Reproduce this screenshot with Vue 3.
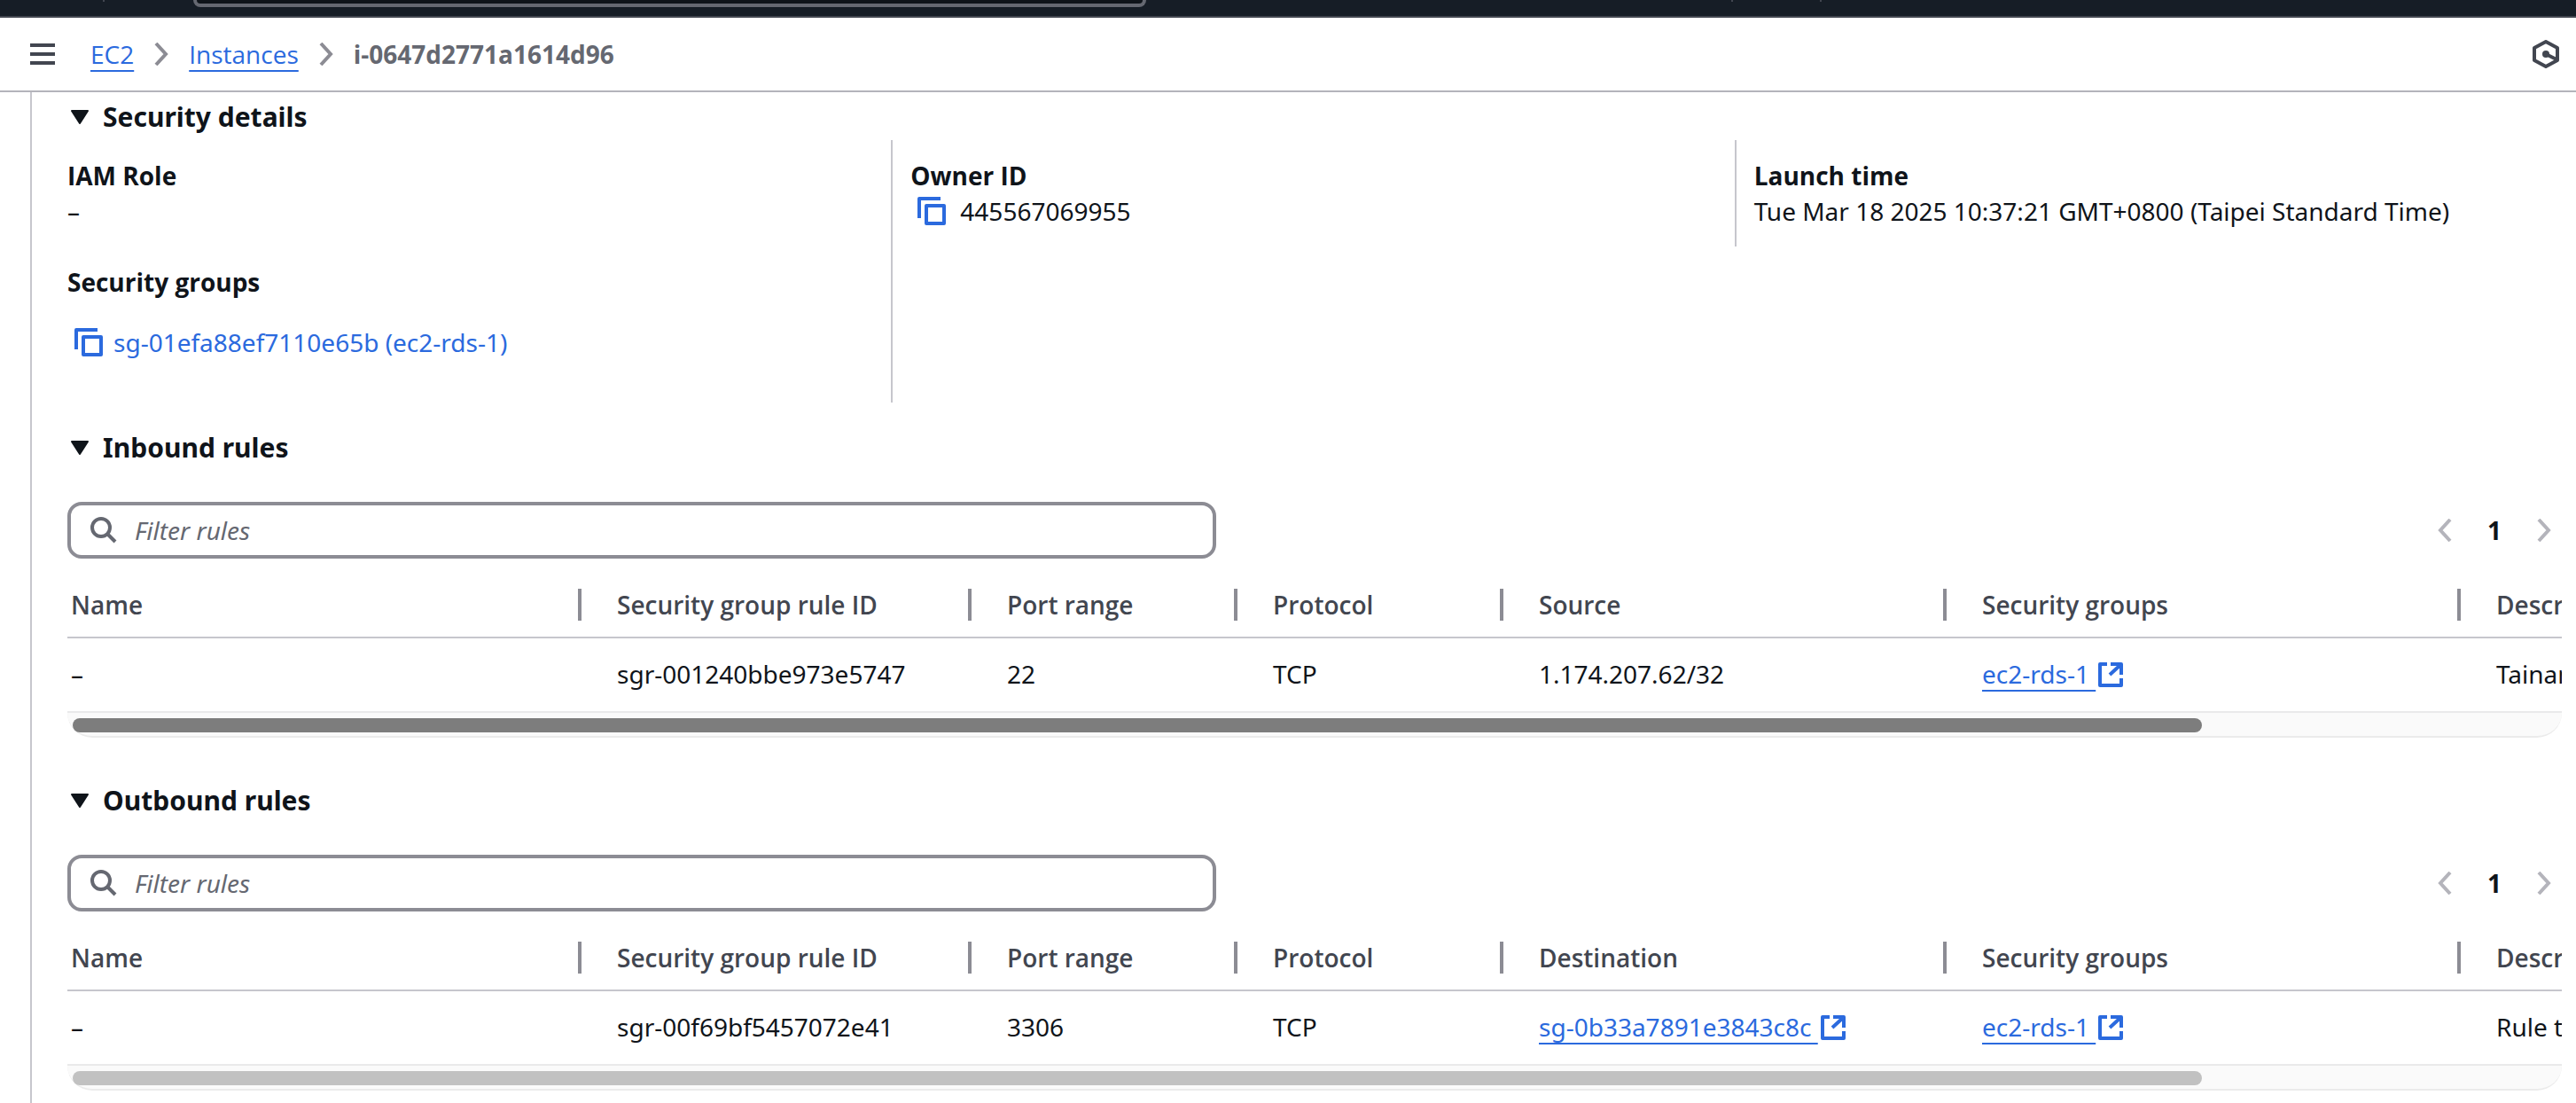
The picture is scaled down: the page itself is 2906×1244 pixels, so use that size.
<script setup>
import { ref } from 'vue'

const sections = ref([
  {
    id: 'inbound',
    title: 'Inbound rules',
    peerLabel: 'Source',
    active: true,
    rows: [
      { name: '–', rule: 'sgr-001240bbe973e5747', port: '22', protocol: 'TCP', peer: '1.174.207.62/32', peerLink: false, group: 'ec2-rds-1', description: 'Tainan' },
    ],
  },
  {
    id: 'outbound',
    title: 'Outbound rules',
    peerLabel: 'Destination',
    active: false,
    rows: [
      { name: '–', rule: 'sgr-00f69bf5457072e41', port: '3306', protocol: 'TCP', peer: 'sg-0b33a7891e3843c8c', peerLink: true, group: 'ec2-rds-1', description: 'Rule to connect' },
    ],
  },
])
</script>

<template>
  <div class="page">
    <header class="topbar">
      <span class="tick tick-left"></span>
      <div class="global-search"></div>
      <span class="tick tick-mid"></span>
      <span class="tick tick-right"></span>
    </header>

    <nav class="crumbs" aria-label="Breadcrumbs">
      <button class="icon-btn menu" type="button" aria-label="Open navigation">
        <svg width="28" height="24" viewBox="0 0 28 24"><path d="M0 2h28M0 12h28M0 22h28" stroke="#424650" stroke-width="4" /></svg>
      </button>
      <a class="link" href="#">EC2</a>
      <svg class="sep" width="16" height="26" viewBox="0 0 16 26"><path d="M2 1l11 12L2 25" fill="none" stroke="#8c8c94" stroke-width="4" /></svg>
      <a class="link" href="#">Instances</a>
      <svg class="sep" width="16" height="26" viewBox="0 0 16 26"><path d="M2 1l11 12L2 25" fill="none" stroke="#8c8c94" stroke-width="4" /></svg>
      <span class="current">i-0647d2771a1614d96</span>
      <button class="icon-btn assistant" type="button" aria-label="Assistant">
        <svg width="30" height="32" viewBox="0 0 30 32" fill="none" stroke="#424650" stroke-width="4" stroke-linejoin="round">
          <path d="M15 2L28 9v14l-13 7L2 23V9z" />
          <path d="M15 16l12 6" />
          <circle cx="15" cy="16" r="4" fill="#424650" stroke="none" />
        </svg>
      </button>
    </nav>

    <main class="panel">
      <h3 class="heading">
        <button class="toggle" type="button" aria-expanded="true">
          <svg width="20" height="16" viewBox="0 0 20 16"><path d="M1 1h18l-9 14z" fill="#0f141a" stroke="#0f141a" stroke-width="2" stroke-linejoin="round" /></svg>
          Security details
        </button>
      </h3>

      <div class="details">
        <dl class="col">
          <div class="field">
            <dt>IAM Role</dt>
            <dd>–</dd>
          </div>
          <div class="field">
            <dt>Security groups</dt>
            <dd class="spaced">
              <button class="copy" type="button" aria-label="Copy security group">
                <svg width="32" height="32" viewBox="0 0 32 32" fill="none" stroke="#2b6ade" stroke-width="4" stroke-linejoin="round"><path d="M2 24V2h24M10 10h20v20H10z" /></svg>
              </button>
              <a class="plain" href="#">sg-01efa88ef7110e65b (ec2-rds-1)</a>
            </dd>
          </div>
        </dl>
        <dl class="col ruled">
          <div class="field">
            <dt>Owner ID</dt>
            <dd>
              <button class="copy wide" type="button" aria-label="Copy owner ID">
                <svg width="32" height="32" viewBox="0 0 32 32" fill="none" stroke="#2b6ade" stroke-width="4" stroke-linejoin="round"><path d="M2 24V2h24M10 10h20v20H10z" /></svg>
              </button>
              445567069955
            </dd>
          </div>
        </dl>
        <dl class="col ruled short">
          <div class="field">
            <dt>Launch time</dt>
            <dd>Tue Mar 18 2025 10:37:21 GMT+0800 (Taipei Standard Time)</dd>
          </div>
        </dl>
      </div>

      <section v-for="s in sections" :key="s.id" class="rules">
        <h3 class="heading">
          <button class="toggle" type="button" aria-expanded="true">
            <svg width="20" height="16" viewBox="0 0 20 16"><path d="M1 1h18l-9 14z" fill="#0f141a" stroke="#0f141a" stroke-width="2" stroke-linejoin="round" /></svg>
            {{ s.title }}
          </button>
        </h3>

        <div class="tools">
          <label class="filter">
            <svg width="30" height="30" viewBox="0 0 30 30" fill="none" stroke="#656871" stroke-width="4"><circle cx="12" cy="12" r="10" /><path d="M19 19l9 9" /></svg>
            <input type="search" placeholder="Filter rules" :aria-label="'Filter ' + s.title" />
          </label>
          <div class="pager">
            <button class="icon-btn" type="button" disabled aria-label="Previous page">
              <svg width="16" height="26" viewBox="0 0 16 26"><path d="M14 1L3 13l11 12" fill="none" stroke="#b4b4bb" stroke-width="4" /></svg>
            </button>
            <button class="icon-btn page-no" type="button">1</button>
            <button class="icon-btn" type="button" disabled aria-label="Next page">
              <svg width="16" height="26" viewBox="0 0 16 26"><path d="M2 1l11 12L2 25" fill="none" stroke="#b4b4bb" stroke-width="4" /></svg>
            </button>
          </div>
        </div>

        <div class="scroller">
          <table>
            <colgroup>
              <col class="w-name" /><col class="w-rule" /><col class="w-small" /><col class="w-small" /><col class="w-peer" /><col class="w-group" /><col class="w-group" />
            </colgroup>
            <thead>
              <tr>
                <th><span>Name</span></th>
                <th><span>Security group rule ID</span></th>
                <th><span>Port range</span></th>
                <th><span>Protocol</span></th>
                <th><span>{{ s.peerLabel }}</span></th>
                <th><span>Security groups</span></th>
                <th><span>Description</span></th>
              </tr>
            </thead>
            <tbody>
              <tr v-for="r in s.rows" :key="r.rule">
                <td>{{ r.name }}</td>
                <td>{{ r.rule }}</td>
                <td>{{ r.port }}</td>
                <td>{{ r.protocol }}</td>
                <td>
                  <a v-if="r.peerLink" class="link" href="#">{{ r.peer }}&nbsp;<svg class="ext" width="28" height="28" viewBox="0 0 28 28" fill="none" stroke="#2b6ade" stroke-width="4"><path d="M10 2H2v24h24v-8M14 2h12v12M25 3L13 14" stroke-linejoin="round" /></svg></a>
                  <template v-else>{{ r.peer }}</template>
                </td>
                <td>
                  <a class="link" href="#">{{ r.group }}&nbsp;<svg class="ext" width="28" height="28" viewBox="0 0 28 28" fill="none" stroke="#2b6ade" stroke-width="4"><path d="M10 2H2v24h24v-8M14 2h12v12M25 3L13 14" stroke-linejoin="round" /></svg></a>
                </td>
                <td>{{ r.description }}</td>
              </tr>
            </tbody>
          </table>
        </div>
        <div class="track"><div class="thumb" :class="{ active: s.active }"></div></div>
      </section>
    </main>
  </div>
</template>

<style>
body {
  margin: 0;
  background: #fff;
}
</style>

<style scoped>
.page {
  display: flex;
  flex-direction: column;
  min-height: 100vh;
  font-family: "Noto Sans", "Open Sans", sans-serif;
  font-size: 28px;
  line-height: 40px;
  color: #0f141a;
}
button {
  padding: 0;
  border: 0;
  background: none;
  font: inherit;
  color: inherit;
}
svg {
  display: block;
  flex: none;
}
.topbar {
  display: flex;
  align-items: flex-start;
  height: 18px;
  background: #161d26;
  border-bottom: 2px solid #424650;
}
.tick {
  width: 2px;
  height: 2px;
  background: #424650;
}
.tick-left {
  margin-left: 116px;
}
.tick-mid {
  margin-left: 660px;
}
.tick-right {
  margin-left: 98px;
}
.global-search {
  box-sizing: border-box;
  width: 37%;
  height: 8px;
  margin-left: 100px;
  background: #0f141a;
  border: 4px solid #656871;
  border-top: 0;
  border-radius: 0 0 12px 12px;
}
.crumbs {
  display: flex;
  align-items: center;
  height: 82px;
  padding: 0 19px 0 34px;
  border-bottom: 2px solid #b4b4bb;
  font-family: "Open Sans", "Noto Sans", sans-serif;
}
.menu {
  margin-right: 40px;
}
.sep {
  margin: 0 23px;
}
.current {
  font-weight: 700;
  color: #656871;
}
.assistant {
  margin-left: auto;
}
.link {
  color: #2b6ade;
  text-decoration: underline;
  text-decoration-thickness: 2px;
  text-underline-offset: 7px;
  text-decoration-skip-ink: none;
}
.plain {
  color: #2b6ade;
  text-decoration: none;
}
.panel {
  flex: 1;
  margin-left: 34px;
  padding: 8px 16px 14px 40px;
  border-left: 2px solid #c6c6cd;
}
.heading {
  margin: 0;
  font-size: 30px;
  line-height: 40px;
  font-weight: 700;
}
.toggle {
  display: flex;
  align-items: center;
  gap: 16px;
  padding-left: 4px;
}
.details {
  display: grid;
  grid-template-columns: repeat(3, 1fr);
  column-gap: 40px;
  margin: 6px 0 31px;
}
.col {
  margin: 0;
}
.ruled {
  margin-left: -22px;
  padding-left: 20px;
  border-left: 2px solid #c6c6cd;
}
.short {
  align-self: start;
}
.field {
  padding: 20px 0;
}
dt {
  font-family: "Open Sans", "Noto Sans", sans-serif;
  font-weight: 700;
}
dd {
  display: flex;
  align-items: center;
  margin: 0;
}
.spaced {
  margin: 28px 0;
}
.copy {
  margin: 0 12px 0 8px;
}
.wide {
  margin-right: 16px;
}
.rules + .rules {
  margin-top: 51px;
}
.tools {
  display: flex;
  align-items: center;
  justify-content: space-between;
  margin-top: 41px;
}
.filter {
  box-sizing: border-box;
  display: flex;
  align-items: center;
  gap: 20px;
  width: 50%;
  max-width: 1296px;
  height: 64px;
  padding: 0 22px;
  border: 4px solid #8c8c94;
  border-radius: 16px;
}
.filter input {
  flex: 1;
  min-width: 0;
  padding: 0;
  border: 0;
  outline: 0;
  background: none;
  font: inherit;
  color: inherit;
}
.filter input::placeholder {
  font-style: italic;
  color: #656871;
  opacity: 1;
}
.pager {
  display: flex;
  align-items: center;
  gap: 40px;
  padding-right: 12px;
}
.page-no {
  font-weight: 700;
}
.scroller {
  overflow: hidden;
}
table {
  width: 3280px;
  table-layout: fixed;
  border-collapse: separate;
  border-spacing: 0;
}
.w-name, .w-group {
  width: 580px;
}
.w-rule {
  width: 440px;
}
.w-small {
  width: 300px;
}
.w-peer {
  width: 500px;
}
th {
  height: 36px;
  padding: 34px 0 18px;
  border-bottom: 2px solid #c6c6cd;
  text-align: left;
  line-height: 36px;
  font-family: "Open Sans", "Noto Sans", sans-serif;
  font-weight: 600;
  color: #424650;
}
th span {
  display: block;
  padding-left: 40px;
  border-right: 4px solid #8c8c94;
}
td {
  height: 40px;
  padding: 20px 0 22px 40px;
  border-bottom: 2px solid #e9e9ea;
  white-space: nowrap;
}
th:first-child span, td:first-child {
  padding-left: 4px;
}
.ext {
  display: inline-block;
  margin-left: 3px;
  vertical-align: -4px;
}
.track {
  box-sizing: border-box;
  height: 28px;
  padding: 6px;
  background: #fafafa;
  border-bottom: 2px solid #ebebeb;
  border-radius: 0 0 32px 32px;
}
.thumb {
  width: calc(600% / 7);
  height: 16px;
  border-radius: 8px;
  background: #c1c1c1;
}
.thumb.active {
  background: #7d7d7d;
}
</style>
